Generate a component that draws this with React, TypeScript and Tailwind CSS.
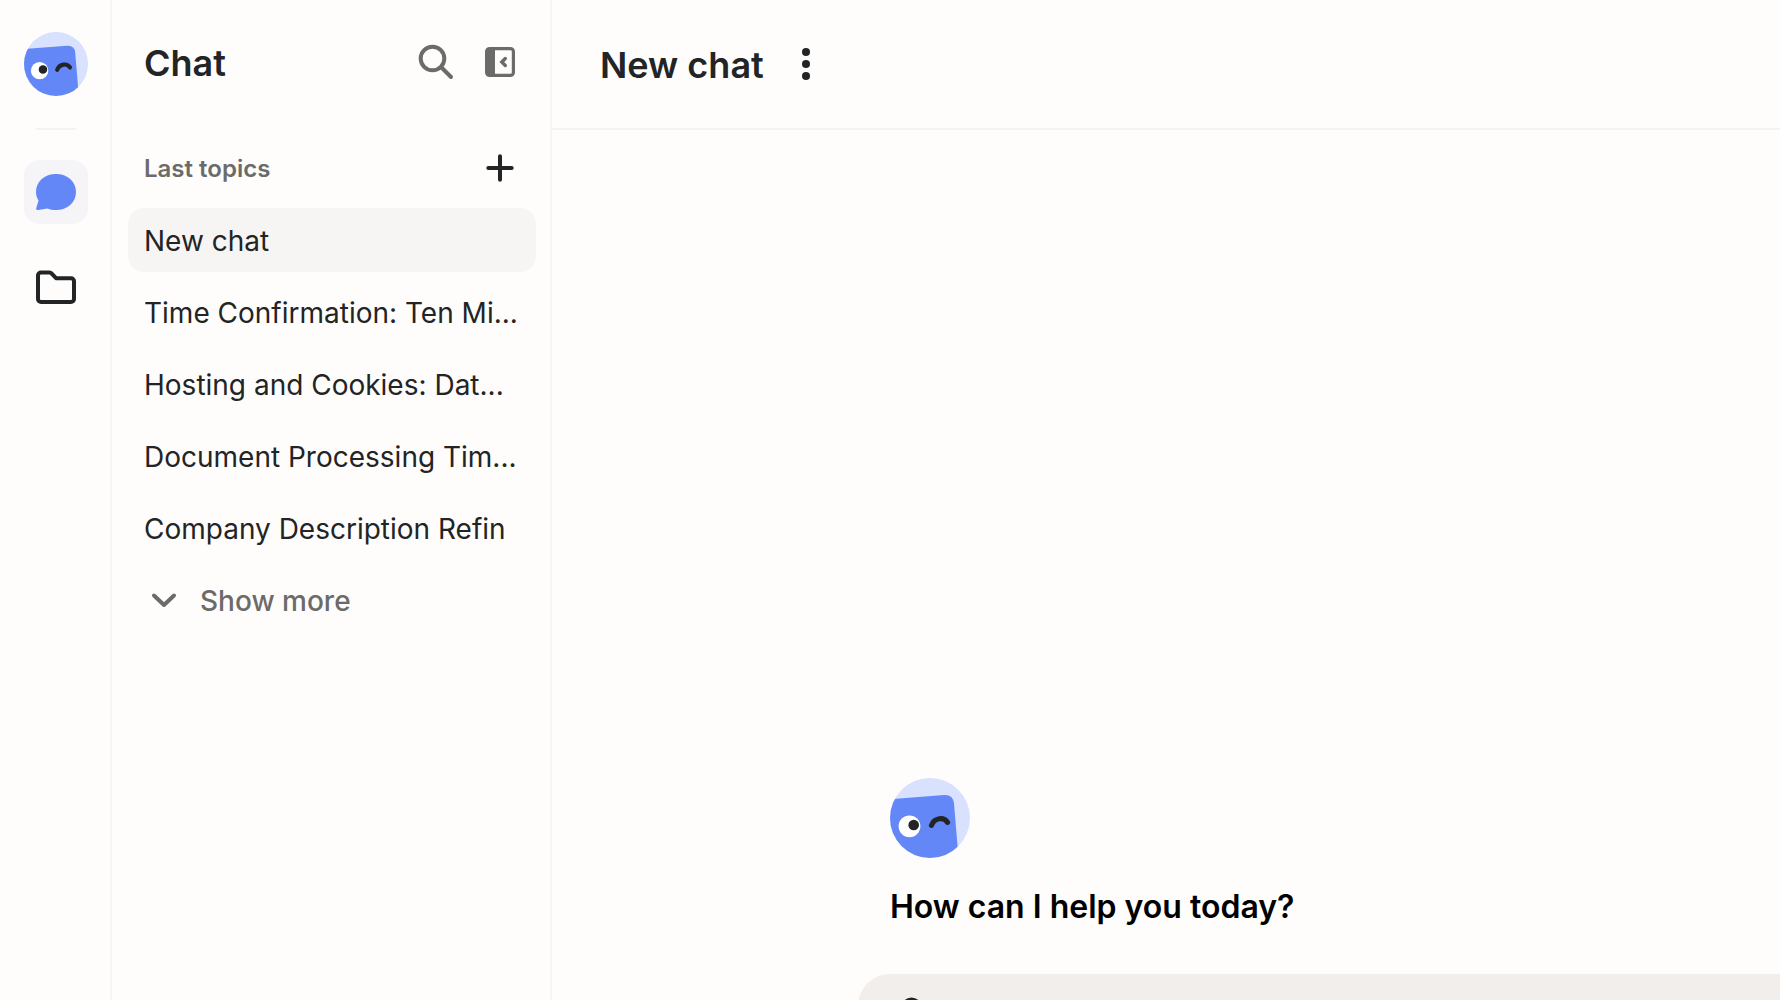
const topics = [
  { id: 1, title: "New chat" },
  { id: 2, title: "Time Confirmation: Ten Mi..." },
  { id: 3, title: "Hosting and Cookies: Dat..." },
  { id: 4, title: "Document Processing Tim..." },
  { id: 5, title: "Company Description Refin" },
];

export default function App() {
  return (
    <div className="flex h-screen overflow-hidden bg-[#fefdfc] font-['Inter',sans-serif] text-[#222425]">
      <Rail />
      <Sidebar activeId={1} />
      <ChatView />
    </div>
  );
}

function Rail() {
  return (
    <nav aria-label="Main" className="flex w-28 shrink-0 flex-col items-center border-r-2 border-[#f7f6f5] pt-8 pl-0.5">
      <a href="#home" aria-label="Home">
        <Logo className="size-16" />
      </a>
      <hr className="mt-8 mb-[30px] h-0.5 w-10 border-0 bg-[#f5f3f2]" />
      <button aria-label="Chat" className="flex size-16 items-center justify-center rounded-2xl bg-[#f5f5f7]">
        <svg viewBox="0 0 40 40" className="size-10" fill="#6487f8">
          <path d="M20 2C31.500 2 40 9.600 40 20s-8.500 18-20 18c-3.200 0-5.600-.5-8.500-1.600L2.400 38C.6 38.200-.2 37.400.3 36L2.500 28.500C.9 26 0 23.200 0 20 0 9.600 8.500 2 20 2z" />
        </svg>
      </button>
      <button aria-label="Files" className="mt-8 flex size-16 items-center justify-center rounded-2xl">
        <svg viewBox="0 0 40 40" className="size-10" fill="none" stroke="#222425" strokeWidth="4" strokeLinejoin="round">
          <path d="M5 4.500h8.500c.8 0 1.500.3 2 .9L20 10.200h15a3 3 0 0 1 3 3V31a3 3 0 0 1-3 3H5a3 3 0 0 1-3-3V7.500a3 3 0 0 1 3-3z" />
        </svg>
      </button>
    </nav>
  );
}

function Sidebar({ activeId }: { activeId: number }) {
  return (
    <aside className="w-[440px] shrink-0 border-r-2 border-[#f7f6f5] pr-3.5 pl-4">
      <div className="flex h-32 items-center justify-between px-4 pb-0.5">
        <h2 className="text-[36px] leading-[44px] font-semibold">Chat</h2>
        <div className="flex gap-6 pb-0.5 text-[#6b6b6a]">
          <button aria-label="Search">
            <svg viewBox="0 0 40 40" className="size-10" fill="none" stroke="currentColor" strokeWidth="4" strokeLinecap="round">
              <circle cx="16.500" cy="16.500" r="11.800" />
              <path d="M25.500 25.500L35 35" />
            </svg>
          </button>
          <button aria-label="Collapse sidebar">
            <svg viewBox="0 0 40 40" className="size-10" fill="none" stroke="currentColor">
              <rect x="6.600" y="6.600" width="26.800" height="26.800" rx="3" strokeWidth="3.200" />
              <path d="M6.500 6.500H15v27H6.500z" fill="currentColor" stroke="none" />
              <path d="M25.300 16.500L21.800 20l3.500 3.500" strokeWidth="3.400" strokeLinecap="round" />
            </svg>
          </button>
        </div>
      </div>
      <div className="flex h-20 items-center justify-between px-4">
        <h3 className="pt-0.5 text-[24px] leading-8 font-semibold text-[#6b6b6a]">Last topics</h3>
        <button aria-label="New topic">
          <svg viewBox="0 0 40 40" className="size-10" fill="none" stroke="currentColor" strokeWidth="4" strokeLinecap="round">
            <path d="M20 8.300v23.400M8.300 20h23.400" />
          </svg>
        </button>
      </div>
      <ul className="flex flex-col gap-2">
        {topics.map((t) => (
          <li key={t.id}>
            <a
              href={`#topic-${t.id}`}
              className={`flex h-16 items-center rounded-2xl px-4 pt-0.5 text-[28px] leading-10 whitespace-nowrap ${t.id === activeId ? "bg-[#f6f5f4]" : ""}`}
            >
              {t.title}
            </a>
          </li>
        ))}
      </ul>
      <button className="mt-2 flex h-16 items-center gap-4 px-4 pt-0.5 text-[28px] leading-10 font-medium text-[#6b6b6a]">
        <svg viewBox="0 0 40 40" className="size-10" fill="none" stroke="currentColor" strokeWidth="4" strokeLinecap="round" strokeLinejoin="round">
          <path d="M10 14.500l10 9.500 10-9.500" />
        </svg>
        Show more
      </button>
    </aside>
  );
}

function ChatView() {
  return (
    <main className="flex min-w-0 flex-1 flex-col">
      <header className="flex h-[130px] shrink-0 items-center gap-[22px] border-b-2 border-[#f5f3f2] px-12">
        <h1 className="pt-0.5 text-[36px] leading-[44px] font-semibold">New chat</h1>
        <button aria-label="Chat options">
          <svg viewBox="0 0 40 40" className="size-10" fill="currentColor">
            <circle cx="20" cy="8" r="4" />
            <circle cx="20" cy="20" r="4" />
            <circle cx="20" cy="32" r="4" />
          </svg>
        </button>
      </header>
      <section className="flex flex-1 flex-col justify-end pl-[306px]">
        <Logo className="ml-8 size-20" />
        <p className="mt-[29px] ml-8 text-[32px] leading-10 font-semibold text-black">How can I help you today?</p>
        <form className="mt-[47px] -mb-[102px] flex h-32 shrink-0 items-start gap-4 rounded-l-[32px] bg-[#f1eeec] pt-5 pl-8">
          <button type="button" aria-label="Attach file">
            <svg viewBox="0 0 40 40" className="size-10" fill="none" stroke="currentColor" strokeWidth="4" strokeLinecap="round">
              <path d="M33 18v10a10 10 0 0 1-20 0V14a8.500 8.500 0 0 1 17 0v13" />
            </svg>
          </button>
          <textarea aria-label="Message" className="h-20 flex-1 resize-none bg-transparent text-[28px] outline-none" />
        </form>
      </section>
    </main>
  );
}

function Logo({ className }: { className: string }) {
  return (
    <svg viewBox="0 0 80 80" className={className} aria-hidden="true">
      <clipPath id="face">
        <circle cx="40" cy="40" r="40" />
      </clipPath>
      <g clipPath="url(#face)">
        <rect width="80" height="80" fill="#d8e1fe" />
        <path d="M0 21.300L54 17.100q9-.6 10 8.400L68.500 80H0z" fill="#6487f8" />
      </g>
      <circle cx="19.500" cy="48.300" r="10.900" fill="#fff" />
      <circle cx="23.700" cy="47" r="5.300" fill="#222425" />
      <path d="M41.500 47.300c3-8 12.500-8.500 16-3" fill="none" stroke="#222425" strokeWidth="5.200" strokeLinecap="round" />
    </svg>
  );
}
